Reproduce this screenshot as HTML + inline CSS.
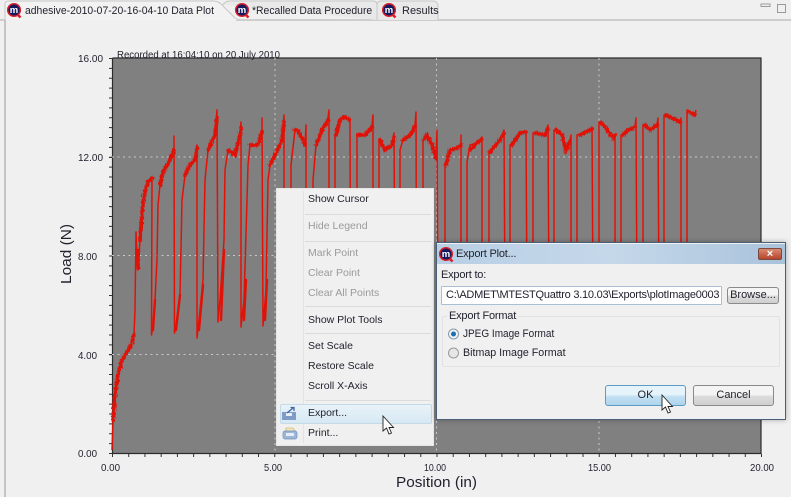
<!DOCTYPE html>
<html><head><meta charset="utf-8">
<style>
html,body{margin:0;padding:0;background:#f0f0f0;}
body{width:791px;height:497px;overflow:hidden;position:relative;font-family:"Liberation Sans",sans-serif;color:#222;filter:blur(.3px);}
svg{position:absolute;left:0;top:0;}
.t{position:absolute;white-space:nowrap;font-size:10.5px;line-height:14px;color:#22222e;transform-origin:0 50%;}
.g{color:#9a9a9a;}
.sep{position:absolute;left:305px;width:126px;height:1px;background:#dcdcdc;}
#menu{position:absolute;left:277px;top:189px;width:156px;height:256px;background:#f0f0f0;box-shadow:0 0 0 1px #e6e6e6;}
#gut{position:absolute;left:303px;top:191px;width:1px;height:252px;background:#e2e3e3;}
#hl{position:absolute;left:280px;top:404px;width:150px;height:18px;border:1px solid #c3dbe9;border-radius:2px;background:linear-gradient(#e9f2f8,#d6e8f3);}
#dlg{position:absolute;left:437px;top:243px;width:348px;height:176px;background:#f0f0f0;box-shadow:0 0 0 1px #4a6076,0 0 5px 1px rgba(0,0,0,.3);}
#tb{position:absolute;left:437px;top:244px;width:348px;height:20px;background:linear-gradient(90deg,#b8cfe4,#c5d8ea 50%,#a9c3db);}
#cl{position:absolute;left:758px;top:248px;width:24px;height:12px;background:linear-gradient(#d98a72,#b6452c);border:1px solid #7d4a40;box-sizing:border-box;border-radius:2px;color:#fff;font-size:11px;line-height:10px;text-align:center;font-weight:bold;}
#inp{position:absolute;left:441px;top:286px;width:279px;height:17px;background:#fff;border:1px solid #a9c0d4;border-radius:1px;}
.btn{position:absolute;box-sizing:border-box;text-align:center;border:1px solid #8a8a8a;border-radius:3px;background:linear-gradient(#f4f4f4 45%,#dcdcdc 55%,#cfcfcf);font-size:11px;color:#22222e;}
#grp{position:absolute;left:442px;top:316px;width:336px;height:49px;border:1px solid #e0e2e3;border-radius:2px;}
</style></head>
<body>
<svg width="791" height="497" viewBox="0 0 791 497" font-family="Liberation Sans, sans-serif">
<defs>
<filter id="j" x="-5%" y="-5%" width="110%" height="110%" color-interpolation-filters="sRGB"><feTurbulence type="fractalNoise" baseFrequency="0.8 0.4" numOctaves="2" seed="4"/><feDisplacementMap in="SourceGraphic" scale="4" xChannelSelector="R" yChannelSelector="G"/></filter>
<g id="logo"><path d="M9.500 10.500l4 4" stroke="#d8202a" stroke-width="2.600"/><circle cx="7" cy="7" r="6.300" fill="#16195e" stroke="#d8202a" stroke-width="1.500"/><text x="7" y="10" font-size="9.500" font-weight="bold" fill="#fff" text-anchor="middle">m</text></g>
</defs>
<!-- chrome -->
<rect x="4" y="20" width="2" height="477" fill="#c4c4c4"/>
<path d="M0 20H791" stroke="#c2c2c2" stroke-width="1.400"/>
<path d="M223 5Q225 1 230 1H373Q377 1 377 5V20" fill="#e9e9e9" stroke="#c6c6c6"/>
<path d="M377 20V5Q377 1 381 1H433Q437 1 438 5V20" fill="#e9e9e9" stroke="#c6c6c6"/>
<path d="M5 20V4Q5 1 9 1H213Q219 1 223 6L233 16Q236 20 242 20" fill="#f2f2f2" stroke="#c6c6c6"/>
<path d="M6 20H236V22H6Z" fill="#f0f0f0"/>
<use href="#logo" x="7" y="3"/><use href="#logo" x="235" y="3"/><use href="#logo" x="382" y="3"/>
<rect x="761" y="4" width="9" height="2.500" fill="none" stroke="#9a9a9a"/>
<rect x="777.500" y="4.500" width="8" height="8" fill="none" stroke="#9a9a9a"/>
<!-- plot -->
<rect x="112" y="58" width="649" height="395" fill="#808080"/>
<path d="M112.500 58V453.500H761V58H112.500" fill="none" stroke="#2c2c2c" stroke-width="1.200"/>
<path d="M110.500 58V453" stroke="#333" stroke-width="3" stroke-dasharray="1 8.875"/>
<path d="M109 58.500h3M109 157.500h3M109 256h3M109 354.500h3M109 453.500h3" stroke="#333"/>
<path d="M112 455.500H762" stroke="#333" stroke-width="3" stroke-dasharray="1 15.225"/>
<path d="M275 58V453M436.500 58V453M599 58V453M112 157H761M112 255.500H761M112 354.500H761" stroke="#c9c9c9" stroke-width="1" stroke-dasharray="2 3.500"/>
<g fill="none" stroke="#e01208" stroke-width="1.500" stroke-linejoin="round">
<path d="M112 450L113 420L115 395L118 375L122 360L127 352L131 345L134 335L135 310L136 232L137 255L138 270L140 240L142 215L144 195L148 182L151 178L152 177L151.500 335L153 325L155 300L157 260L158 205L160 185L163 172L170 160L174 150L174 136L174.500 333L176 325L180 295L182 200L185 175L190 165L195 160L197 145L197 338L200 310L203 280L205 180L208 150L215 135L217 110L218 322L220 300L224 240L225 170L228 150L235 155L240 135L241 122L241 327L244 300L247 200L248 165L250 145L258 145L262 130L262 118L263 326L266 290L268 180L270 165L275 155L282 140L284 115L284 300M291 300L291 165L295 130L298 131L303 140L305 145L306 125V300M313 300V180L316 145L322 130L328 118L329 110V300M335 300V135L340 120L345 117L350 120L350 125L350.500 300M357 300V135L365 135L372 125L373 115V300M379 300V140L385 150L392 145L394 133L395 300M400 300V150L403 140L410 135L415 125L416 112L416.500 300M423 300V140L427 135L432 145L436 158L437 130L438 300M445 300V165L450 150L458 148L461 145L461 135V300M467 300V162L470 145L477 143L482 137V300M489 300V152L500 140L504 130L505 300M510 300V145L520 133L526 132L527 300M533 300V133L545 135L548 125L549 300M554 300V130L562 135L566 150L570 140L571 135V300M577 300V135L590 130L592 127L593 300M599 300V122L607 130L613 138L615 135V300M621 300V135L628 130L635 127L636 118L637 300M643 300V125L650 130L657 125L658 118L659 300M664 300V115L672 118L680 122L681 118V300M687 300V110L695 115L696 110"/>
</g>
<g fill="none" stroke="#e01208" stroke-width="2.400" stroke-linecap="round">
<path d="M153 330L155 300M176 330L180 295M199 330L203 285M221 320L224 250M244 320L246 280M265 320L267 280"/>
</g>
<g fill="none" stroke="#e01208" stroke-width="3.800" filter="url(#j)" stroke-linecap="round">
<path d="M113 420L115 395L118 375L122 360L127 352L131 345L134 335M138 268V250M140 240L142 215L144 195L148 182L152 178M160 185L163 172L170 160L174 150M185 175L190 165L195 160L197 148M208 150L215 135L217 118M228 150L235 155L240 135L241 128M250 145L258 145L262 132M270 165L275 155L282 140L284 122M295 130L298 131L303 140L305 145M316 145L322 130L328 120M336 135L340 120L345 117L350 120M358 135L365 135L372 127M380 140L385 150L392 145L394 137M403 140L410 135L415 127M424 140L427 135L432 145L436 158M446 165L450 150L458 148L461 145M470 150L477 143L482 139M490 152L500 140L504 134M512 145L520 133L526 132M535 133L545 135L548 129M556 130L562 135L566 150L570 142M580 135L590 130L592 129M601 122L607 130L613 138L615 135M623 135L628 130L635 127M645 125L650 130L657 125M666 115L672 118L680 122M689 112L695 115"/>
</g>
<g fill="#22222e" font-size="10.500">
<text x="78" y="62" textLength="25" lengthAdjust="spacingAndGlyphs">16.00</text>
<text x="78" y="161" textLength="25" lengthAdjust="spacingAndGlyphs">12.00</text>
<text x="78" y="260" textLength="19" lengthAdjust="spacingAndGlyphs">8.00</text>
<text x="78" y="359" textLength="19" lengthAdjust="spacingAndGlyphs">4.00</text>
<text x="78" y="457" textLength="19" lengthAdjust="spacingAndGlyphs">0.00</text>
<text x="101" y="471" textLength="19" lengthAdjust="spacingAndGlyphs">0.00</text>
<text x="264" y="471" textLength="18" lengthAdjust="spacingAndGlyphs">5.00</text>
<text x="424" y="471" textLength="22" lengthAdjust="spacingAndGlyphs">10.00</text>
<text x="588" y="471" textLength="23" lengthAdjust="spacingAndGlyphs">15.00</text>
<text x="750" y="471" textLength="24" lengthAdjust="spacingAndGlyphs">20.00</text>
<text x="396" y="487" font-size="15" textLength="81" lengthAdjust="spacingAndGlyphs">Position (in)</text>
<text transform="translate(71 284) rotate(-90)" font-size="14.500" textLength="60" lengthAdjust="spacingAndGlyphs">Load (N)</text>
<text x="117" y="58" font-size="10" textLength="163" lengthAdjust="spacingAndGlyphs">Recorded at 16:04:10 on 20 July 2010</text>
</g>
</svg>

<div class="t" style="left:25px;top:4px;font-size:11px;transform:scaleX(.945);">adhesive-2010-07-20-16-04-10 Data Plot</div>
<div class="t" style="left:252px;top:4px;font-size:11px;transform:scaleX(.945);">*Recalled Data Procedure</div>
<div class="t" style="left:402px;top:4px;font-size:11px;">Results</div>

<div id="menu"></div><div id="gut"></div><div id="hl"></div>
<div class="sep" style="top:214px"></div><div class="sep" style="top:241px"></div><div class="sep" style="top:306px"></div><div class="sep" style="top:333px"></div><div class="sep" style="top:400px"></div>
<div class="t" style="left:308px;top:192px">Show Cursor</div>
<div class="t g" style="left:308px;top:219px">Hide Legend</div>
<div class="t g" style="left:308px;top:246px">Mark Point</div>
<div class="t g" style="left:308px;top:266px">Clear Point</div>
<div class="t g" style="left:308px;top:286px">Clear All Points</div>
<div class="t" style="left:308px;top:313px">Show Plot Tools</div>
<div class="t" style="left:308px;top:339px">Set Scale</div>
<div class="t" style="left:308px;top:359px">Restore Scale</div>
<div class="t" style="left:308px;top:379px">Scroll X-Axis</div>
<div class="t" style="left:308px;top:406px">Export...</div>
<div class="t" style="left:308px;top:426px">Print...</div>

<div id="dlg"></div><div id="tb"></div><div id="cl">×</div>
<div class="t" style="left:456px;top:247px;font-size:11px;letter-spacing:-.2px;">Export Plot...</div>
<div class="t" style="left:441px;top:268px;font-size:11px;letter-spacing:-.2px;">Export to:</div>
<div id="inp"></div>
<div class="t" style="left:446px;top:288px;font-size:11px;letter-spacing:-.24px;">C:\ADMET\MTESTQuattro 3.10.03\Exports\plotImage0003</div>
<div class="btn" style="left:727px;top:287px;width:52px;height:17px;line-height:15px;">Browse...</div>
<div id="grp"></div>
<div class="t" style="left:447px;top:309px;font-size:11px;letter-spacing:-.2px;background:#f0f0f0;padding:0 2px;">Export Format</div>
<div class="t" style="left:463px;top:327px;font-size:11px;transform:scaleX(.91);">JPEG Image Format</div>
<div class="t" style="left:463px;top:346px;font-size:11px;transform:scaleX(.97);">Bitmap Image Format</div>
<div class="btn" style="left:605px;top:385px;width:81px;height:21px;line-height:19px;border-color:#5b9dc4;background:linear-gradient(#e6f3fb 45%,#c3e0f2 55%,#aed4ec);">OK</div>
<div class="btn" style="left:693px;top:385px;width:81px;height:21px;line-height:19px;">Cancel</div>

<svg width="791" height="497" viewBox="0 0 791 497" style="pointer-events:none">
<use href="#logo" x="439" y="247"/>
<circle cx="453.500" cy="334" r="5" fill="#eef3f7" stroke="#8c9aa6"/><circle cx="453.500" cy="334" r="2.500" fill="#1f6fb0"/>
<circle cx="453.500" cy="353" r="5" fill="#e6e6e6" stroke="#9a9a9a"/>
<!-- export icon -->
<rect x="282" y="412" width="14" height="8" fill="#7e9cc6"/><rect x="286" y="413" width="6" height="3" fill="#e8eef6"/>
<path d="M287 413l6-5M290.500 407.500h3.500v3.500" stroke="#3f66a0" stroke-width="1.300" fill="none"/>
<!-- print icon -->
<path d="M286 428h7l2 3h-9z" fill="#f3e7b4" stroke="#b7a76a" stroke-width=".6"/>
<rect x="283" y="431" width="14" height="8" rx="2" fill="#9db6d8" stroke="#6f8fbc" stroke-width=".7"/>
<rect x="286" y="433" width="8" height="3" fill="#e5edf6"/>
<!-- cursors -->
<path d="M383 416V431L386.500 428L389 434L391.500 433L389 427.500H393.500Z" fill="#fff" stroke="#222" stroke-width=".9"/>
<path d="M662 395V410L665.500 407L668 413L670.500 412L668 406.500H672.500Z" fill="#fff" stroke="#222" stroke-width=".9"/>
</svg>
</body></html>
